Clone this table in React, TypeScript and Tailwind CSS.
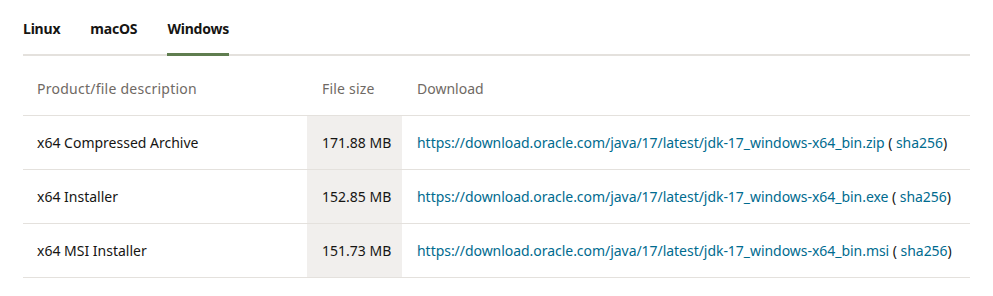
import React from "react";

const rows = [
  { desc: "x64 Compressed Archive", size: "171.88 MB", url: "https://download.oracle.com/java/17/latest/jdk-17_windows-x64_bin.zip" },
  { desc: "x64 Installer", size: "152.85 MB", url: "https://download.oracle.com/java/17/latest/jdk-17_windows-x64_bin.exe" },
  { desc: "x64 MSI Installer", size: "151.73 MB", url: "https://download.oracle.com/java/17/latest/jdk-17_windows-x64_bin.msi" },
];

export default function App() {
  return (
    <div className="w-[993px] h-[296px] bg-white text-[14px] text-[#161513]" style={{ fontFamily: '"Noto Sans", "Open Sans", sans-serif' }}>
      <div className="pl-[23px] pr-[23px] pt-[18px]">
        <div className="flex gap-[30px] border-b-[2px] border-[#e4e1dd] tracking-[-0.2px]">
          <div className="font-bold pb-[14px] border-b-[3px] border-transparent -mb-[2px]">Linux</div>
          <div className="font-bold pb-[14px] border-b-[3px] border-transparent -mb-[2px]">macOS</div>
          <div className="font-bold pb-[14px] border-b-[3px] border-[#5f7d4f] -mb-[2px]">Windows</div>
        </div>
        <div className="grid grid-cols-[284px_95px_1fr]">
          <div className="h-[60px] flex items-center pt-[6px] pl-[14px] text-[#6f6964] tracking-[0.25px] border-b border-[#e4e1dd]">Product/file description</div>
          <div className="h-[60px] flex items-center pt-[6px] pl-[15px] text-[#6f6964] tracking-[0.2px] border-b border-[#e4e1dd]">File size</div>
          <div className="h-[60px] flex items-center pt-[6px] pl-[15px] text-[#6f6964] border-b border-[#e4e1dd]">Download</div>
          {rows.map((r) => (
            <React.Fragment key={r.url}>
              <div className="h-[54px] flex items-center pl-[14px] border-b border-[#e4e1dd]">{r.desc}</div>
              <div className="h-[54px] flex items-center pl-[15px] bg-[#f1efed] border-b border-[#e4e1dd]">{r.size}</div>
              <div className="h-[54px] flex items-center pl-[15px] border-b border-[#e4e1dd] whitespace-nowrap tracking-[-0.04px]">
                <a className="text-[#006b8f]">{r.url}</a>
                <span>&nbsp;( <a className="text-[#006b8f]">sha256</a>)</span>
              </div>
            </React.Fragment>
          ))}
        </div>
      </div>
    </div>
  );
}
